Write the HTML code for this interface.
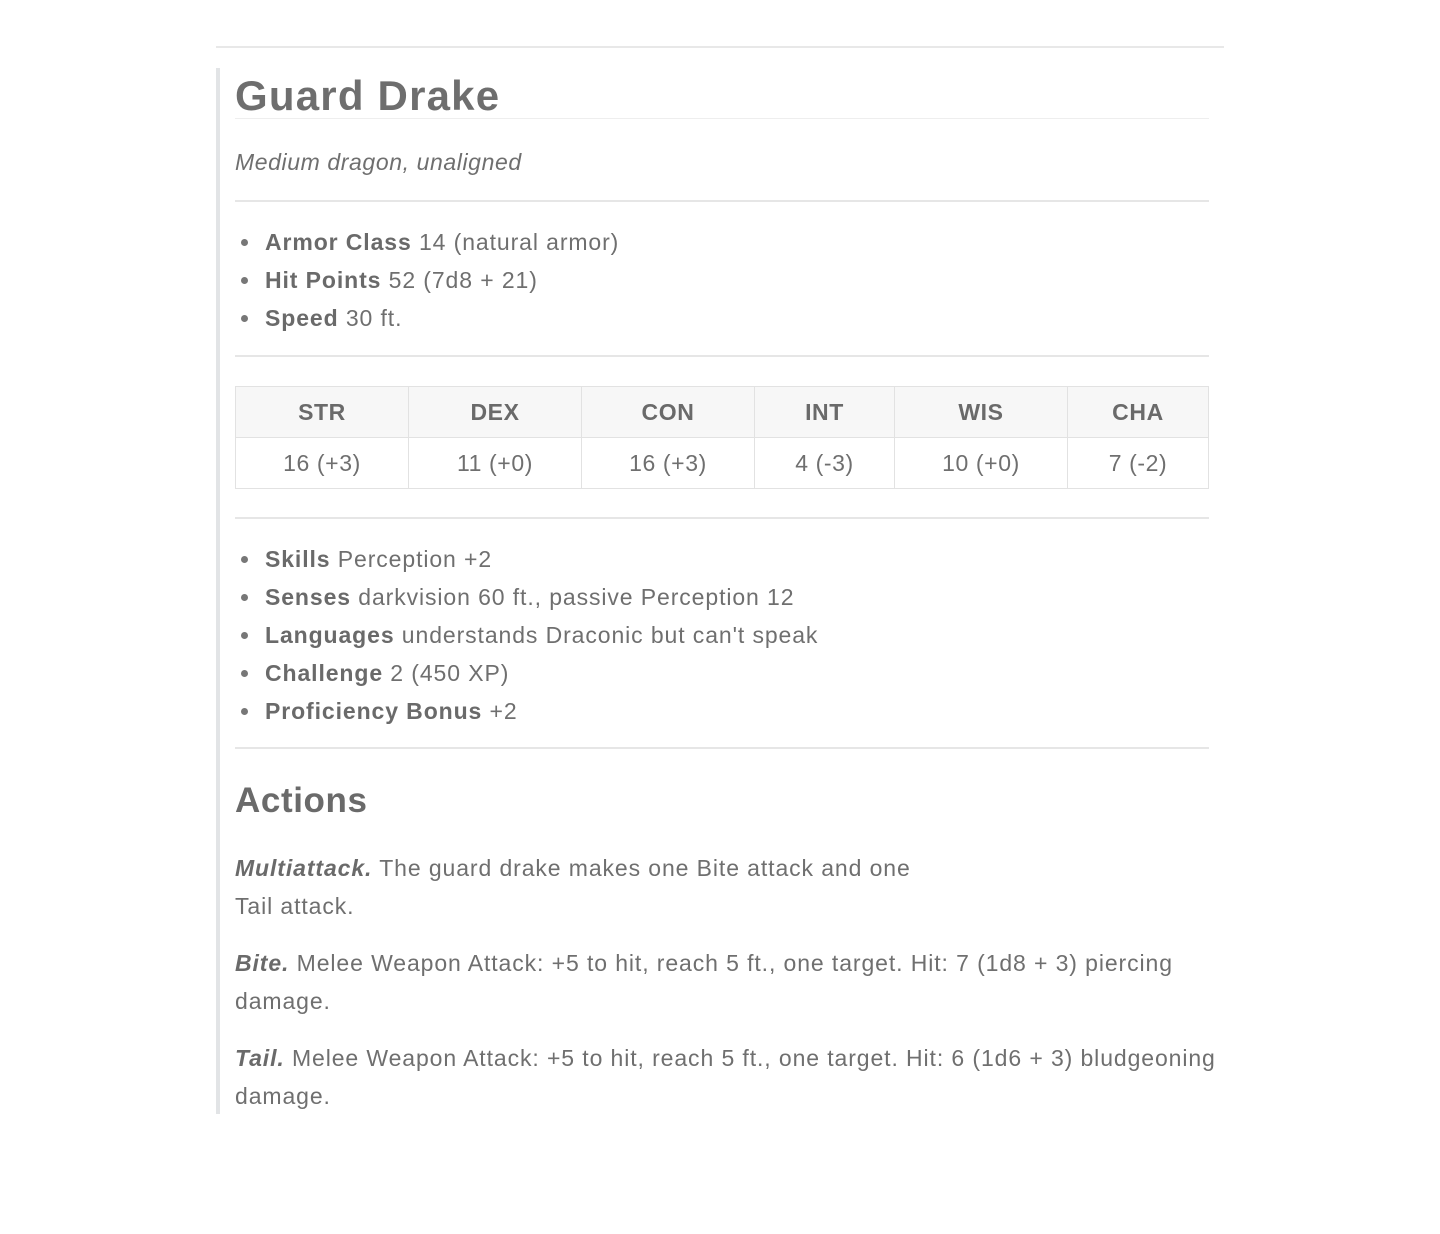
<!DOCTYPE html>
<html><head><meta charset="utf-8"><style>
body{margin:0;background:#fff;font-family:"Liberation Sans",sans-serif;color:#6f6f6f;width:1440px;height:1234px;position:relative;overflow:hidden}
.a{position:absolute;white-space:nowrap}
.hr{position:absolute;left:235px;width:974px;height:2px;background:#e6e6e6}
b{color:#6a6a6a}
.li{position:absolute;left:265px;font-size:23px;line-height:30px;white-space:nowrap;letter-spacing:0.9px}
.li:before{content:"";position:absolute;left:-24px;top:12px;width:7px;height:7px;border-radius:50%;background:#777}
table{position:absolute;left:235px;top:386px;border-collapse:collapse;font-size:23px;letter-spacing:0.6px}
td,th{border:1px solid #e2e2e2;text-align:center;height:50px;padding:0}
th{background:#f7f7f7;color:#6a6a6a}
p{position:absolute;left:235px;margin:0;font-size:23px;line-height:38px;width:1000px;letter-spacing:0.9px;white-space:nowrap}
</style></head><body>
<div style="position:absolute;left:216px;top:46px;width:1008px;height:2px;background:#e8e8e8"></div>
<div style="position:absolute;left:216px;top:68px;width:4px;height:1046px;background:#e2e4e6"></div>
<div class="a" style="left:235px;top:70px;font-size:42px;line-height:52px;font-weight:bold;color:#6e6e6e;letter-spacing:1.2px">Guard Drake</div>
<div class="hr" style="top:118px;height:1px;background:#eee"></div>
<div class="a" style="left:235px;top:149px;font-size:23px;font-style:italic;letter-spacing:0.6px">Medium dragon, unaligned</div>
<div class="hr" style="top:200px"></div>
<div class="li" style="top:227px"><b>Armor Class</b> 14 (natural armor)</div>
<div class="li" style="top:265px"><b>Hit Points</b> 52 (7d8 + 21)</div>
<div class="li" style="top:303px"><b>Speed</b> 30 ft.</div>
<div class="hr" style="top:355px"></div>
<table><tr><th style="width:172px">STR</th><th style="width:172px">DEX</th><th style="width:172px">CON</th><th style="width:139px">INT</th><th style="width:172px">WIS</th><th style="width:140px">CHA</th></tr>
<tr><td>16 (+3)</td><td>11 (+0)</td><td>16 (+3)</td><td>4 (-3)</td><td>10 (+0)</td><td>7 (-2)</td></tr></table>
<div class="hr" style="top:517px"></div>
<div class="li" style="top:544px"><b>Skills</b> Perception +2</div>
<div class="li" style="top:582px"><b>Senses</b> darkvision 60 ft., passive Perception 12</div>
<div class="li" style="top:620px"><b>Languages</b> understands Draconic but can't speak</div>
<div class="li" style="top:658px"><b>Challenge</b> 2 (450 XP)</div>
<div class="li" style="top:696px"><b>Proficiency Bonus</b> +2</div>
<div class="hr" style="top:747px"></div>
<div class="a" style="left:235px;top:779px;font-size:35px;line-height:44px;font-weight:bold;color:#6a6a6a;letter-spacing:0.6px">Actions</div>
<p style="top:849px"><b><i>Multiattack.</i></b> The guard drake makes one Bite attack and one<br>Tail attack.</p>
<p style="top:944px"><b><i>Bite.</i></b> Melee Weapon Attack: +5 to hit, reach 5 ft., one target. Hit: 7 (1d8 + 3) piercing<br>damage.</p>
<p style="top:1039px"><b><i>Tail.</i></b> Melee Weapon Attack: +5 to hit, reach 5 ft., one target. Hit: 6 (1d6 + 3) bludgeoning<br>damage.</p>
</body></html>
